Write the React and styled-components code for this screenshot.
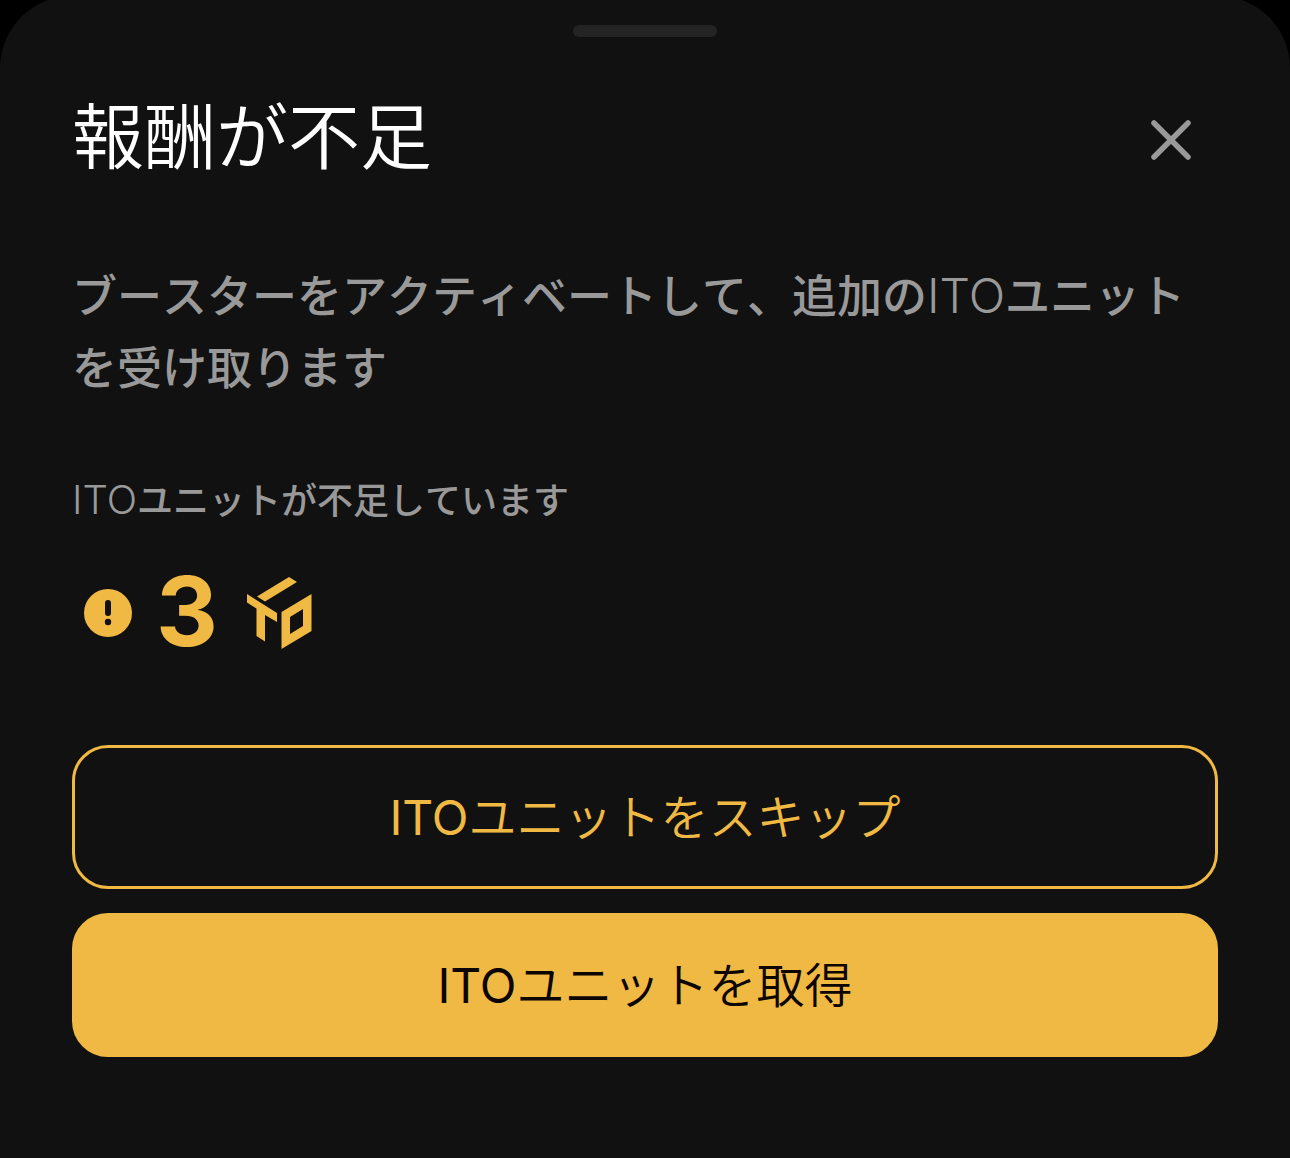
import React, { useState } from "react";
import styled, { createGlobalStyle } from "styled-components";

const GOLD = "#f0b944";
const SURFACE = "#111111";
const MUTED = "#999999";

const GlobalStyle = createGlobalStyle`
  * {
    box-sizing: border-box;
  }

  body {
    margin: 0;
    background: #000;
    font-family: "Noto Sans CJK JP", sans-serif;
    font-kerning: none;
    color: #fff;
  }
`;

const Page = styled.div`
  min-height: 100vh;
  display: flex;
  flex-direction: column;
  overflow: hidden;
`;

const Sheet = styled.main`
  flex: 1;
  display: flex;
  flex-direction: column;
  margin-top: -4px;
  padding: 29px 72px 72px;
  border-radius: 72px 72px 0 0;
  background: ${SURFACE};
`;

const Handle = styled.div`
  align-self: center;
  width: 144px;
  height: 12px;
  border-radius: 6px;
  background: #242424;
`;

const Header = styled.header`
  display: flex;
  align-items: flex-start;
  justify-content: space-between;
  margin-top: 55px;
`;

const Title = styled.h1`
  margin: 0;
  font-size: 72px;
  line-height: 80px;
  font-weight: 350;
`;

const CloseButton = styled.button`
  display: grid;
  place-items: center;
  width: 96px;
  height: 96px;
  padding: 0;
  border: 0;
  background: none;
  color: ${MUTED};
  cursor: pointer;
`;

const Latin = styled.span`
  font-family: Inter, "Liberation Sans", sans-serif;
  font-size: ${(p) => p.$size}px;
  font-weight: ${(p) => p.$weight};
  font-kerning: normal;
  line-height: 1;
`;

const Description = styled.p`
  margin: 70px 0 0;
  font-size: 45px;
  line-height: 72px;
  font-weight: 500;
  color: ${MUTED};
`;

const Label = styled.p`
  margin: 68px 0 0;
  font-size: 36px;
  line-height: 56px;
  font-weight: 500;
  color: ${MUTED};
`;

const Amount = styled.div`
  display: flex;
  align-items: center;
  gap: 24px;
  height: 96px;
  margin-top: 39px;
  padding-left: 12px;
  color: ${GOLD};
`;

const Value = styled.strong`
  padding-bottom: 4px;
  font-family: Inter, "Liberation Sans", sans-serif;
  font-size: 96px;
  line-height: 96px;
  font-weight: 700;
`;

const Actions = styled.div`
  display: flex;
  flex-direction: column;
  gap: 24px;
  margin-top: 84px;
`;

const ActionButton = styled.button`
  height: 144px;
  padding: 0 24px 6px;
  border: 3px solid ${GOLD};
  border-radius: 36px;
  background: ${(p) => (p.$filled ? GOLD : "transparent")};
  color: ${(p) => (p.$filled ? "#0d0500" : GOLD)};
  font-family: inherit;
  font-size: 48px;
  line-height: 72px;
  font-weight: 350;
  cursor: pointer;
`;

const CloseIcon = () => (
  <svg width="42" height="40" viewBox="-2 0 42 40" fill="none" aria-hidden="true">
    <path d="M3 3 37 37M37 3 3 37" stroke="currentColor" strokeWidth="5.5" strokeLinecap="round" />
  </svg>
);

const AlertIcon = () => (
  <svg width="48" height="48" viewBox="0 0 48 48" aria-hidden="true">
    <circle cx="24" cy="24" r="24" fill="currentColor" />
    <path d="M24 14v10" stroke={SURFACE} strokeWidth="6" strokeLinecap="round" />
    <circle cx="24" cy="33" r="3.2" fill={SURFACE} />
  </svg>
);

const ItoIcon = () => (
  <svg width="76" height="72" viewBox="-5 0 76 72" fill="currentColor" aria-hidden="true">
    <path d="M42 0 50 5 18 24.500 10 19.500Z" />
    <path d="M0 17 30 36V45L18 38V64.500L9.500 59V31.500L0 25.500Z" />
    <path fillRule="evenodd" d="M64.500 17V54L34.500 72V35ZM56 32 43 40V57L56 49Z" />
  </svg>
);

export default function App() {
  const [open, setOpen] = useState(true);

  return (
    <Page>
      <GlobalStyle />
      {open && (
        <Sheet lang="ja">
          <Handle />
          <Header>
            <Title>報酬が不足</Title>
            <CloseButton type="button" aria-label="閉じる" onClick={() => setOpen(false)}>
              <CloseIcon />
            </CloseButton>
          </Header>
          <Description>
            ブースターをアクティベートして、追加の<Latin $size={48} $weight={300}>ITO</Latin>ユニットを受け取ります
          </Description>
          <Label>
            <Latin $size={40} $weight={300}>ITO</Latin>ユニットが不足しています
          </Label>
          <Amount>
            <AlertIcon />
            <Value>3</Value>
            <ItoIcon />
          </Amount>
          <Actions>
            <ActionButton type="button">
              <Latin $size={48} $weight={400}>ITO</Latin>ユニットをスキップ
            </ActionButton>
            <ActionButton type="button" $filled>
              <Latin $size={48} $weight={400}>ITO</Latin>ユニットを取得
            </ActionButton>
          </Actions>
        </Sheet>
      )}
    </Page>
  );
}
